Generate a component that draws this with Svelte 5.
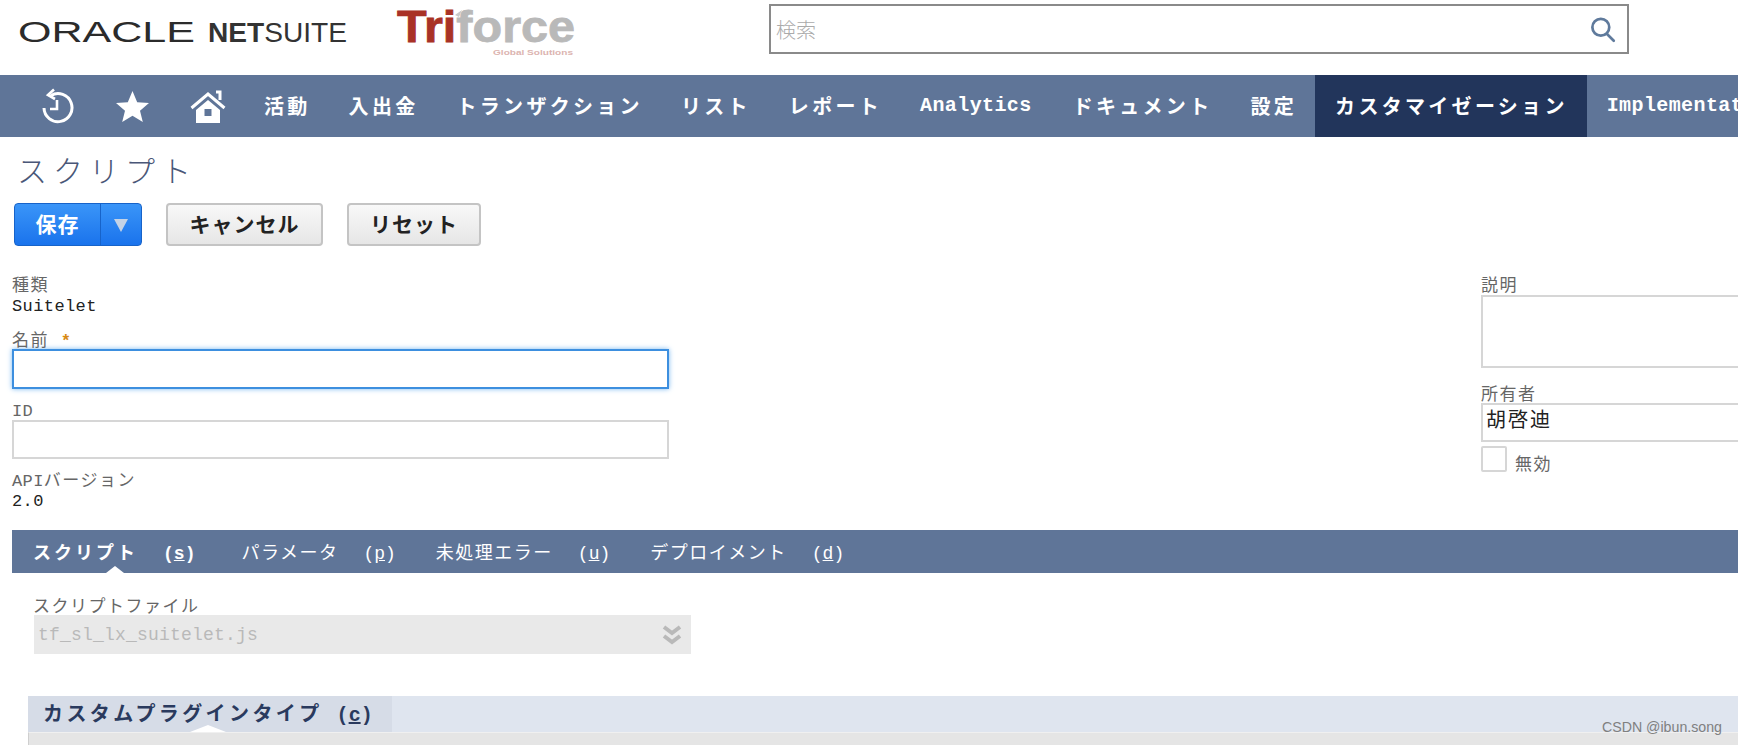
<script>
    const navItems = [
        { label: '活動' },
        { label: '入出金' },
        { label: 'トランザクション' },
        { label: 'リスト' },
        { label: 'レポート' },
        { label: 'Analytics', latin: true },
        { label: 'ドキュメント' },
        { label: '設定' },
        { label: 'カスタマイゼーション', active: true },
        { label: 'Implementation', latin: true }
    ];

    const tabs = [
        { label: 'スクリプト', key: 's', active: true },
        { label: 'パラメータ', key: 'p' },
        { label: '未処理エラー', key: 'u' },
        { label: 'デプロイメント', key: 'd' }
    ];
</script>

<div class="page">
    <!-- top bar -->
    <header>
        <svg class="logo-oracle" viewBox="0 0 330 30" aria-label="Oracle NetSuite">
            <text class="oracle" x="0" y="25" textLength="177" lengthAdjust="spacingAndGlyphs">ORACLE</text>
            <text class="netsuite" x="190" y="25" textLength="139" lengthAdjust="spacingAndGlyphs"><tspan class="net">NET</tspan>SUITE</text>
        </svg>
        <svg class="logo-triforce" viewBox="0 0 180 50" aria-label="Triforce">
            <text class="tri" x="0" y="34" textLength="178" lengthAdjust="spacingAndGlyphs"><tspan class="tri-red">Tri</tspan>force</text>
            <path d="M58 7 l7 -5 -3 7z" fill="#c9c9c9" />
            <text class="global" x="96" y="47" textLength="80" lengthAdjust="spacingAndGlyphs">Global Solutions</text>
        </svg>
        <div class="search">
            <span>検索</span>
            <svg viewBox="0 0 24 24" width="27" height="27" fill="none" stroke="#5f7a9c" stroke-width="2.4">
                <circle cx="10.5" cy="10" r="7.5" />
                <path d="M16 16l6 6" stroke-linecap="round" />
            </svg>
        </div>
    </header>

    <!-- main navigation -->
    <nav>
        <div class="nav-icons">
            <svg viewBox="0 0 34 36" width="34" height="36" fill="none" stroke="#fff" stroke-width="3">
                <path d="M3 20a14 14 0 1 0 7-12.500" />
                <path d="M13 1.500l-6 5.500 7 4" stroke-width="2.600" />
                <path d="M16 12v9h-7" stroke-width="2.600" />
            </svg>
            <svg viewBox="0 0 33 31" width="33" height="31" fill="#fff">
                <path d="M16.500 0l4.700 11.200 11.800 .9-9 7.700 2.800 11.200-10.300-6.200-10.300 6.200 2.800-11.200-9-7.700 11.800-.9z" />
            </svg>
            <svg viewBox="0 0 36 33" width="36" height="33" fill="none" stroke="#fff">
                <path d="M1.500 18L18 4l16.500 14" stroke-width="3" />
                <path d="M26 2h4v8" stroke-width="3" />
                <path fill="#fff" fill-rule="evenodd" stroke="none" d="M18 10l12 10v13H6V20zM14.500 19v7h7v-7z" />
            </svg>
        </div>
        {#each navItems as item}
            <a class="nav-item" class:active={item.active} class:latin={item.latin}>{item.label}</a>
        {/each}
    </nav>

    <main>
        <h1>スクリプト</h1>

        <div class="actions">
            <div class="btn-save">
                <span class="save-label">保存</span>
                <span class="save-arrow"></span>
            </div>
            <button>キャンセル</button>
            <button>リセット</button>
        </div>

        <div class="form">
            <div class="col-left">
                <div class="label">種類</div>
                <div class="value ascii">Suitelet</div>

                <div class="label name-label">名前 <span class="req">*</span></div>
                <div class="input focused"></div>

                <div class="label id-label"><span class="ascii">ID</span></div>
                <div class="input"></div>

                <div class="label api-label"><span class="ascii">API</span>バージョン</div>
                <div class="value ascii">2.0</div>
            </div>

            <div class="col-right">
                <div class="label desc-label">説明</div>
                <div class="textarea"></div>
                <div class="label owner-label">所有者</div>
                <div class="owner">胡啓迪</div>
                <div class="check-row">
                    <span class="checkbox"></span>
                    <span class="check-label">無効</span>
                </div>
            </div>
        </div>

        <!-- tabs -->
        <div class="tabbar">
            {#each tabs as tab}
                <span class="tab" class:active={tab.active}>{tab.label}<span class="key">(<u>{tab.key}</u>)</span></span>
            {/each}
        </div>

        <div class="tab-body">
            <div class="label file-label">スクリプトファイル</div>
            <div class="select">
                <span>tf_sl_lx_suitelet.js</span>
                <svg viewBox="0 0 20 20" width="20" height="20" fill="none" stroke="#b9b9b9" stroke-width="4">
                    <path d="M2 2l8 6 8-6" />
                    <path d="M2 11l8 6 8-6" />
                </svg>
            </div>
        </div>

        <div class="subtabs">
            <span class="subtab">カスタムプラグインタイプ<span class="key">(<u>c</u>)</span></span>
        </div>
        <div class="subtab-body"></div>
    </main>

    <div class="watermark">CSDN @ibun.song</div>
</div>

<style>
    :global(body) {
        background: #fff;
        overflow: hidden;
    }

    .page {
        position: relative;
        width: 1738px;
        height: 745px;
        overflow: hidden;
        background: #fff;
        font-family: "Liberation Mono", "Noto Sans CJK JP", monospace;
    }

    header {
        display: flex;
        align-items: flex-start;
        height: 75px;
    }

    .logo-oracle {
        width: 330px;
        height: 30px;
        margin: 17px 0 0 18px;
        overflow: visible;
    }

    .oracle {
        font: 400 29px "Liberation Sans", sans-serif;
        fill: #2b2b2b;
    }

    .netsuite {
        font: 400 28px "Liberation Sans", sans-serif;
        fill: #333;
    }

    .net {
        font-weight: 700;
    }

    .logo-triforce {
        width: 180px;
        height: 50px;
        margin: 8px 0 0 49px;
        overflow: visible;
    }

    .tri {
        font: 700 44px "Liberation Sans", sans-serif;
        fill: #b9b9b9;
        stroke: #b9b9b9;
        stroke-width: 0.8px;
    }

    .tri-red {
        fill: #a93226;
        stroke: #a93226;
    }

    .global {
        font: 700 8px "Liberation Sans", sans-serif;
        fill: #dcb4b0;
    }

    .search {
        display: flex;
        align-items: center;
        justify-content: space-between;
        box-sizing: border-box;
        width: 860px;
        height: 50px;
        margin: 4px 0 0 192px;
        padding: 0 11px 0 5px;
        border: 2px solid #8a8a8a;
        color: #aaa;
        font-family: "Noto Sans CJK JP", sans-serif;
        font-size: 20px;
        font-weight: 300;
    }

    nav {
        display: flex;
        align-items: stretch;
        height: 62px;
        padding-left: 41px;
        background: #5f7598;
        white-space: nowrap;
    }

    .nav-icons {
        display: flex;
        align-items: center;
        gap: 41px;
        margin-right: 18px;
    }

    .nav-item {
        display: flex;
        align-items: center;
        padding: 0 18px 2px 20px;
        color: #fff;
        font-size: 20px;
        font-weight: 700;
        letter-spacing: 3.300px;
    }

    .nav-item.latin {
        letter-spacing: 0.400px;
        padding-right: 21px;
    }

    .nav-item.active {
        background: #22355b;
        padding-left: 20px;
        padding-right: 19px;
    }

    h1 {
        margin: 0;
        padding: 14px 0 0 17px;
        height: 38px;
        color: #4a5778;
        font-family: "Noto Sans CJK JP", sans-serif;
        font-size: 30px;
        font-weight: 300;
        line-height: 37px;
        letter-spacing: 6px;
    }

    .actions {
        display: flex;
        gap: 24px;
        height: 43px;
        margin: 14px 0 0 14px;
    }

    .btn-save {
        display: flex;
        box-sizing: border-box;
        width: 128px;
        border: 1px solid #1763c9;
        border-radius: 4px;
        background: linear-gradient(#3a95f8, #1a73ec);
    }

    .save-label {
        display: flex;
        align-items: center;
        justify-content: center;
        width: 86px;
        padding-bottom: 3px;
        box-sizing: border-box;
        border-right: 1px solid #1763c9;
        color: #fff;
        font-family: "Noto Sans CJK JP", sans-serif;
        font-size: 21px;
        font-weight: 700;
        letter-spacing: 1px;
    }

    .save-arrow {
        width: 0;
        height: 0;
        margin: 15px 0 0 13px;
        border-left: 7px solid transparent;
        border-right: 7px solid transparent;
        border-top: 13px solid #c4d3e6;
    }

    button {
        box-sizing: border-box;
        width: 157px;
        padding: 0 0 3px;
        border: 2px solid #c4c4c4;
        border-radius: 4px;
        background: linear-gradient(#f8f8f8, #e6e6e6);
        color: #222;
        font-family: "Noto Sans CJK JP", sans-serif;
        font-size: 21px;
        font-weight: 700;
        letter-spacing: 1px;
    }

    button + button {
        width: 134px;
    }

    .form {
        display: flex;
        box-sizing: border-box;
        height: 284px;
        margin-left: 12px;
        padding-top: 31px;
    }

    .col-left {
        flex: none;
        width: 657px;
    }

    .col-right {
        flex: none;
        width: 300px;
        margin-left: 812px;
    }

    .label {
        height: 19px;
        color: #666;
        font-size: 17px;
        line-height: 20px;
        letter-spacing: 1.500px;
    }

    .value {
        height: 20px;
        margin-top: 1px;
        color: #222;
        font-size: 17px;
        line-height: 20px;
    }

    .ascii {
        letter-spacing: 0.400px;
    }

    .name-label {
        margin-top: 15px;
        height: 17px;
    }

    .id-label {
        margin-top: 13px;
        height: 18px;
    }

    .api-label {
        margin-top: 13px;
    }

    .req {
        color: #d88a14;
        font-weight: 700;
    }

    .input {
        box-sizing: border-box;
        height: 39px;
        border: 2px solid #d6d6d6;
    }

    .input.focused {
        height: 40px;
        border-color: #3d8fdf;
        box-shadow: 0 0 5px #7ab8f0;
    }

    .desc-label {
        height: 18px;
    }

    .textarea {
        box-sizing: border-box;
        height: 73px;
        border: 2px solid #d6d6d6;
    }

    .owner-label {
        margin-top: 18px;
        height: 17px;
    }

    .owner {
        box-sizing: border-box;
        height: 39px;
        padding-left: 3px;
        border: 2px solid #d6d6d6;
        color: #222;
        font-size: 20px;
        line-height: 34px;
        letter-spacing: 2px;
    }

    .check-row {
        display: flex;
        gap: 8px;
        margin-top: 4px;
    }

    .checkbox {
        box-sizing: border-box;
        width: 26px;
        height: 26px;
        border: 2px solid #d6d6d6;
        border-radius: 2px;
    }

    .check-label {
        margin-top: 8px;
        color: #666;
        font-size: 17px;
        line-height: 24px;
        letter-spacing: 1.500px;
    }

    .tabbar {
        display: flex;
        align-items: stretch;
        gap: 40px;
        height: 43px;
        margin-left: 12px;
        padding-left: 21px;
        background: #5f7598;
        color: #fff;
        font-size: 18px;
        letter-spacing: 1.500px;
        white-space: nowrap;
    }

    .tab {
        position: relative;
        box-sizing: border-box;
        padding-top: 3px;
        line-height: 43px;
    }

    .tab.active {
        margin-right: 6px;
        font-weight: 700;
        letter-spacing: 3px;
    }

    .tab.active::after {
        content: "";
        position: absolute;
        left: 73px;
        bottom: 0;
        border-left: 9px solid transparent;
        border-right: 9px solid transparent;
        border-bottom: 7px solid #fff;
    }

    .key {
        margin-left: 25px;
        letter-spacing: 0;
    }

    .tab-body {
        box-sizing: border-box;
        height: 123px;
        padding: 25px 0 0 34px;
    }

    .file-label {
        margin-left: -1px;
        height: 17px;
    }

    .select {
        display: flex;
        align-items: center;
        justify-content: space-between;
        box-sizing: border-box;
        width: 657px;
        height: 39px;
        padding: 0 9px 0 4px;
        background: #e9e9e9;
        color: #b9b9b9;
        font-size: 18px;
        letter-spacing: 0.200px;
    }

    .subtabs {
        display: flex;
        height: 36px;
        margin-left: 28px;
        background: #dfe5ef;
    }

    .subtab {
        position: relative;
        box-sizing: border-box;
        width: 364px;
        padding-left: 15px;
        background: #d6dce7;
        color: #2a3a5e;
        font-size: 20px;
        font-weight: 700;
        line-height: 40px;
        letter-spacing: 3.400px;
        white-space: nowrap;
    }

    .subtab .key {
        margin-left: 14px;
    }

    .subtab::after {
        content: "";
        position: absolute;
        left: 162px;
        bottom: 0;
        border-left: 18px solid transparent;
        border-right: 18px solid transparent;
        border-bottom: 7px solid #fff;
    }

    .subtab-body {
        height: 30px;
        margin-left: 28px;
        border-left: 1px solid #cfcfcf;
        border-top: 1px solid #f0f0f0;
        background: #e5e5e5;
    }

    .watermark {
        position: absolute;
        right: 16px;
        bottom: 9px;
        color: #808080;
        font-family: "Liberation Sans", sans-serif;
        font-size: 14.200px;
        line-height: 18px;
    }
</style>
